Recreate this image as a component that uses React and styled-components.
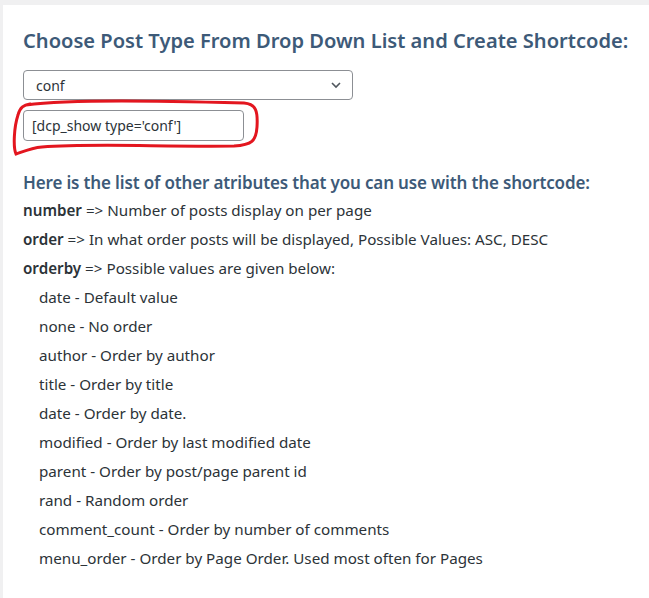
import React from 'react';
import styled, { createGlobalStyle } from 'styled-components';

const GlobalStyle = createGlobalStyle`
  html, body {
    margin: 0;
    padding: 0;
    background: #f0f0f1;
  }
  body {
    font-family: "Segoe UI", "Noto Sans", sans-serif;
    color: #2c3338;
  }
`;

const Panel = styled.div`
  margin: 5px 0 0 3px;
  background: #fff;
  min-height: 593px;
  padding: 23px 20px 0 20px;
  box-sizing: border-box;
`;

const Title = styled.h2`
  margin: 0 0 16px;
  font-size: 20.1px;
  font-weight: 600;
  line-height: 26px;
  color: #3d5a78;
  white-space: nowrap;
`;

const Field = styled.div`
  position: relative;
  display: flex;
  flex-direction: column;
  align-items: flex-start;
  gap: 10px;
`;

const SelectBox = styled.div`
  width: 330px;
  height: 30px;
  box-sizing: border-box;
  border: 1px solid #8c8f94;
  border-radius: 4px;
  display: flex;
  align-items: center;
  justify-content: space-between;
  padding: 0 9px 0 12px;
  font-size: 14px;
  color: #2c3338;
`;

const ShortcodeInput = styled.input`
  width: 221px;
  height: 31px;
  box-sizing: border-box;
  border: 1px solid #8c8f94;
  border-radius: 4px;
  padding: 0 8px;
  font: inherit;
  font-size: 14px;
  color: #2c3338;
  background: #fff;
  outline: none;
`;

const Scribble = styled.svg`
  position: absolute;
  left: -11px;
  top: 27px;
  pointer-events: none;
`;

const SubTitle = styled.h3`
  margin: 30px 0 1px;
  font-size: 17px;
  font-weight: 600;
  line-height: 24px;
  color: #3d5a78;
  letter-spacing: -0.15px;
  white-space: nowrap;
`;

const Row = styled.div`
  font-size: 15.2px;
  line-height: 29px;
  padding-left: ${p => (p.$indent ? '16px' : '0')};
  white-space: nowrap;

  b {
    font-weight: 600;
  }
`;

const attrs = [
  ['number', 'Number of posts display on per page'],
  ['order', 'In what order posts will be displayed, Possible Values: ASC, DESC'],
  ['orderby', 'Possible values are given below:'],
];

const orderby = [
  'date - Default value',
  'none - No order',
  'author - Order by author',
  'title - Order by title',
  'date - Order by date.',
  'modified - Order by last modified date',
  'parent - Order by post/page parent id',
  'rand - Random order',
  'comment_count - Order by number of comments',
  'menu_order - Order by Page Order. Used most often for Pages',
];

const App = () => (
  <>
    <GlobalStyle />
    <Panel>
      <Title>Choose Post Type From Drop Down List and Create Shortcode:</Title>
      <Field>
        <SelectBox>
          <span>conf</span>
          <svg width="14" height="14" viewBox="0 0 14 14">
            <path d="M3 5 L7 9 L11 5" fill="none" stroke="#50575e" strokeWidth="1.6" />
          </svg>
        </SelectBox>
        <ShortcodeInput readOnly value="[dcp_show type='conf']" />
        <Scribble width="250" height="60" viewBox="0 0 250 60">
          <path
            d="M14 8 C 60 2, 150 4, 232 6 C 244 7, 246 14, 245 30 C 244 44, 240 48, 222 49 C 150 50, 80 46, 30 50 C 18 51, 8 56, 4 57 C 1 50, 2 30, 6 18 C 8 10, 12 8, 18 7"
            fill="none"
            stroke="#e3161f"
            strokeWidth="3"
            strokeLinecap="round"
          />
        </Scribble>
      </Field>
      <SubTitle>Here is the list of other atributes that you can use with the shortcode:</SubTitle>
      {attrs.map(([k, v]) => (
        <Row key={k}>
          <b>{k}</b> =&gt; {v}
        </Row>
      ))}
      {orderby.map((t, i) => (
        <Row key={i} $indent>
          {t}
        </Row>
      ))}
    </Panel>
  </>
);

export default App;
